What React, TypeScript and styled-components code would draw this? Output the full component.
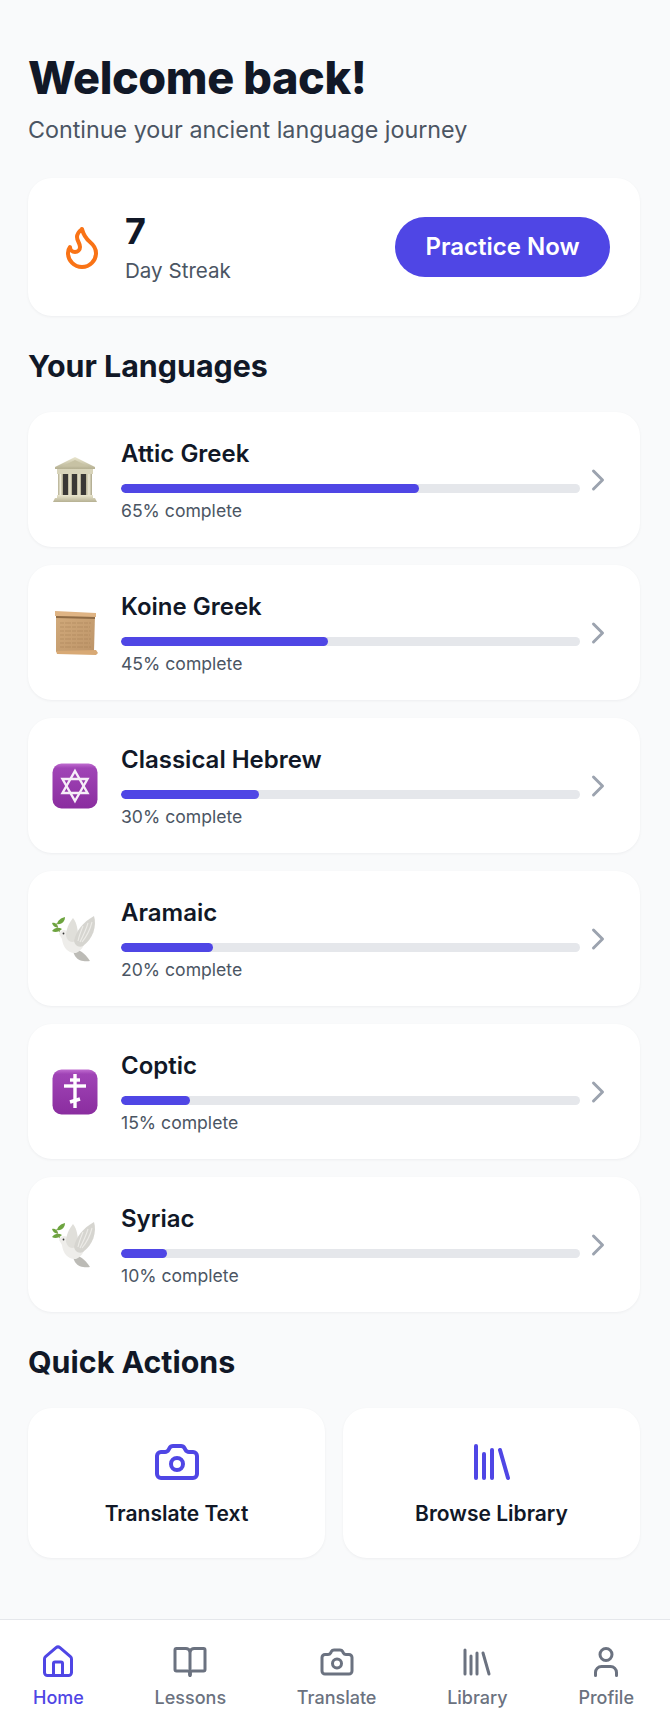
import React from 'react';
import styled, { createGlobalStyle } from 'styled-components';
import { Camera, ChevronRight, Flame, House, Library, User } from 'lucide-react';

const GlobalStyle = createGlobalStyle`
  html, body {
    margin: 0;
    padding: 0;
    background: #f9fafb;
  }
  * {
    box-sizing: border-box;
  }
`;

const Page = styled.div`
  display: flex;
  flex-direction: column;
  min-height: 100vh;
  background: #f9fafb;
  color: #111827;
  font-family: Inter, "Liberation Sans", sans-serif;
`;

const Main = styled.main`
  flex: 1;
  padding: 51px 30px 0 28px;
`;

const Title = styled.h1`
  margin: 0;
  font-size: 45px;
  line-height: 54px;
  font-weight: 800;
  letter-spacing: -0.4px;
`;

const Subtitle = styled.p`
  margin: 10px 0 0;
  font-size: 23.3px;
  line-height: 30px;
  color: #4b5563;
`;

const Card = styled.div`
  background: #fff;
  border-radius: 24px;
  box-shadow: 0 1px 3px rgba(17, 24, 39, 0.05);
`;

const StreakCard = styled(Card)`
  display: flex;
  align-items: center;
  justify-content: space-between;
  height: 138px;
  margin-top: 33px;
  padding: 0 30px;
`;

const StreakInfo = styled.div`
  display: flex;
  align-items: center;
  gap: 19px;
  color: #f97316;
`;

const StreakText = styled.div`
  padding-bottom: 2px;
`;

const StreakCount = styled.div`
  font-size: 36px;
  line-height: 44px;
  font-weight: 700;
  color: #111827;
`;

const StreakLabel = styled.div`
  margin-top: 5px;
  font-size: 20.6px;
  line-height: 26px;
  color: #4b5563;
`;

const PracticeButton = styled.button`
  width: 215px;
  height: 60px;
  padding: 0 0 2px;
  border: 0;
  border-radius: 30px;
  background: #4f46e5;
  color: #fff;
  font: 600 24px Inter, "Liberation Sans", sans-serif;
`;

const SectionTitle = styled.h2`
  margin: 0;
  font-size: 30.4px;
  line-height: 36px;
  font-weight: 700;
`;

const LanguagesTitle = styled(SectionTitle)`
  margin-top: 32px;
`;

const LanguageList = styled.div`
  display: flex;
  flex-direction: column;
  gap: 18px;
  margin-top: 28px;
`;

const LanguageCard = styled(Card)`
  display: flex;
  align-items: center;
  height: 135px;
  padding: 0 24px;
`;

const EmojiBox = styled.div`
  display: flex;
  flex: none;
  width: 46px;
  height: 46px;
  margin-right: 23px;
`;

const LanguageBody = styled.div`
  flex: 1;
  min-width: 0;
  padding-top: 2px;
`;

const LanguageName = styled.div`
  font-size: 24px;
  line-height: 30px;
  font-weight: 600;
`;

const Track = styled.div`
  height: 9px;
  margin-top: 15px;
  border-radius: 5px;
  background: #e5e7eb;
  overflow: hidden;
`;

const Fill = styled.div`
  height: 100%;
  border-radius: 5px;
  background: #4f46e5;
`;

const Percent = styled.div`
  margin-top: 6px;
  font-size: 17.6px;
  line-height: 24px;
  color: #4b5563;
`;

const Chevron = styled.div`
  display: flex;
  flex: none;
  width: 36px;
  color: #9ca3af;
`;

const ActionsTitle = styled(SectionTitle)`
  margin-top: 32px;
`;

const ActionGrid = styled.div`
  display: grid;
  grid-template-columns: 1fr 1fr;
  gap: 18px;
  margin-top: 28px;
`;

const ActionCard = styled(Card)`
  display: flex;
  flex-direction: column;
  align-items: center;
  height: 150px;
  padding-top: 30px;
  color: #4f46e5;
`;

const ActionLabel = styled.div`
  margin-top: 15px;
  font-size: 21px;
  line-height: 26px;
  font-weight: 600;
  color: #111827;
`;

const BottomNav = styled.nav`
  display: flex;
  justify-content: space-between;
  height: 115px;
  padding: 24px 36px 0 33px;
  background: #fff;
  border-top: 1px solid #e5e7eb;
`;

const NavItem = styled.div<{ $active?: boolean }>`
  display: flex;
  flex-direction: column;
  align-items: center;
  color: ${(p) => (p.$active ? '#4f46e5' : '#6b7280')};
`;

const NavLabel = styled.div`
  margin-top: 6px;
  font-size: 18px;
  line-height: 24px;
  font-weight: 500;
`;

// lucide's open book dips too far at the spine, the reference has a flatter top
const LessonsIcon = ({ size }: { size: number }) => (
  <svg
    width={size}
    height={size}
    viewBox="0 0 24 24"
    fill="none"
    stroke="currentColor"
    strokeWidth="2"
    strokeLinecap="round"
    strokeLinejoin="round"
  >
    <path d="M12 5v16" />
    <path d="M3 18a1 1 0 0 1-1-1V4a1 1 0 0 1 1-1h6a3 3 0 0 1 3 2 3 3 0 0 1 3-2h6a1 1 0 0 1 1 1v13a1 1 0 0 1-1 1h-7a2 2 0 0 0-2 3 2 2 0 0 0-2-3z" />
  </svg>
);

const TempleEmoji = () => (
  <svg width="46" height="46" viewBox="0 0 46 46">
    <defs>
      <linearGradient id="stone" x1="0" y1="0" x2="0" y2="1">
        <stop offset="0" stopColor="#eae6cf" />
        <stop offset="1" stopColor="#b5b092" />
      </linearGradient>
      <linearGradient id="column" x1="0" y1="0" x2="1" y2="0">
        <stop offset="0" stopColor="#b3ae92" />
        <stop offset="0.5" stopColor="#efebd6" />
        <stop offset="1" stopColor="#a9a488" />
      </linearGradient>
    </defs>
    <path d="M23 0 L43 10 L43 12 L3 12 L3 10 Z" fill="url(#stone)" />
    <path d="M23 3 L36 9.5 H10 Z" fill="#c7c2a4" />
    <rect x="5" y="12" width="36" height="5" fill="#d8d4ba" />
    <rect x="9" y="17" width="28" height="21" fill="#3a3836" />
    <rect x="6" y="17" width="5" height="22" fill="url(#column)" />
    <rect x="16" y="17" width="4" height="22" fill="url(#column)" />
    <rect x="25" y="17" width="4" height="22" fill="url(#column)" />
    <rect x="34" y="17" width="6" height="22" fill="url(#column)" />
    <path d="M5 38 H41 V41 H43 L45 45 H1 L3 41 H5 Z" fill="url(#stone)" />
  </svg>
);

const ScrollEmoji = () => (
  <svg width="46" height="46" viewBox="0 0 46 46">
    <defs>
      <linearGradient id="paper" x1="0" y1="0" x2="1" y2="1">
        <stop offset="0" stopColor="#d2ab7c" />
        <stop offset="1" stopColor="#bd9468" />
      </linearGradient>
    </defs>
    <path d="M4 3 L43 5 L42 41 L4 42 Z" fill="url(#paper)" />
    <path d="M3 1 L44 3 L44 7 L3 6 Z" fill="#dfb484" />
    <path d="M4 6 L43 7 L43 9 L4 8 Z" fill="#8e6a44" />
    <path d="M4 41 L44 40 L46 43 L44 45 L5 44 Z" fill="#d8a975" />
    <g stroke="#a07a52" strokeWidth="0.8" strokeOpacity="0.6" strokeDasharray="4 1 6 1">
      <path d="M8 13H39M8 17H38M8 21H39M8 25H38M8 29H39M8 33H38M8 37H39" />
    </g>
  </svg>
);

const PurpleTile = ({ id, children }: { id: string; children: React.ReactNode }) => (
  <svg width="46" height="46" viewBox="0 0 46 46">
    <defs>
      <linearGradient id={id} x1="0" y1="0" x2="0" y2="1">
        <stop offset="0" stopColor="#c06dd0" />
        <stop offset="0.1" stopColor="#a044b6" />
        <stop offset="1" stopColor="#8a2d9f" />
      </linearGradient>
    </defs>
    <rect x="0.5" y="0.5" width="45" height="45" rx="9" fill={`url(#${id})`} />
    {children}
  </svg>
);

const StarEmoji = () => (
  <PurpleTile id="tile-star">
    <g fill="none" stroke="#f6eef8" strokeWidth="2.4">
      <path d="M23 8 L35.5 30 H10.5 Z" />
      <path d="M23 38 L35.5 16 H10.5 Z" />
    </g>
  </PurpleTile>
);

const CrossEmoji = () => (
  <PurpleTile id="tile-cross">
    <g fill="none" stroke="#fff" strokeWidth="3.4">
      <path d="M23 5 V39" />
      <path d="M18 11 H28" />
      <path d="M12 17 H34" />
      <path d="M18 33 L28 30" />
    </g>
  </PurpleTile>
);

const DoveEmoji = () => (
  <svg width="46" height="46" viewBox="0 0 46 46">
    <g fill="#6da43f">
      <path d="M5 8 C6 4 9 2 13 1 C13 5 10 9 5 8Z" />
      <path d="M0 7 C3 6 5 8 6 11 C3 12 1 10 0 7Z" />
      <path d="M0 15 C3 11 7 11 10 13 C7 16 3 17 0 15Z" />
    </g>
    <path d="M5 7 C4 10 6 15 10 18" fill="none" stroke="#7e9a4c" strokeWidth="0.9" />
    <path d="M21 33 C27 33 33 37 38 45 C33 46 26 45 23 40 C22 38 21 36 21 33Z" fill="#bcbbb6" />
    <path d="M7 18 C9 13 14 13 17 17 L32 20 C34 27 31 34 24 37 C17 38 11 32 10 23 C9 21 8 20 7 18Z" fill="#eeedea" />
    <path d="M14 20 C14 13 17 7 21 2 C25 7 26 14 26 22 C22 28 16 27 14 20Z" fill="#e0dfda" />
    <path d="M22 25 C24 15 31 6 42 0 C45 10 41 23 31 30 C26 32 23 29 22 25Z" fill="#d6d5d0" />
    <path d="M31 10 C29 15 27 20 26 25 M36 7 C34 14 31 20 28 26 M40 6 C38 14 35 20 30 26" fill="none" stroke="#ecebe7" strokeWidth="1.1" />
    <circle cx="11.5" cy="17.5" r="0.9" fill="#333" />
  </svg>
);

const languages = [
  { name: 'Attic Greek', pct: 65, emoji: <TempleEmoji /> },
  { name: 'Koine Greek', pct: 45, emoji: <ScrollEmoji /> },
  { name: 'Classical Hebrew', pct: 30, emoji: <StarEmoji /> },
  { name: 'Aramaic', pct: 20, emoji: <DoveEmoji /> },
  { name: 'Coptic', pct: 15, emoji: <CrossEmoji /> },
  { name: 'Syriac', pct: 10, emoji: <DoveEmoji /> },
];

const navItems = [
  { label: 'Home', Icon: House, active: true },
  { label: 'Lessons', Icon: LessonsIcon },
  { label: 'Translate', Icon: Camera },
  { label: 'Library', Icon: Library },
  { label: 'Profile', Icon: User },
];

export default function App() {
  return (
    <Page>
      <GlobalStyle />
      <Main>
        <Title>Welcome back!</Title>
        <Subtitle>Continue your ancient language journey</Subtitle>
        <StreakCard>
          <StreakInfo>
            <Flame size={48} strokeWidth={2} />
            <StreakText>
              <StreakCount>7</StreakCount>
              <StreakLabel>Day Streak</StreakLabel>
            </StreakText>
          </StreakInfo>
          <PracticeButton>Practice Now</PracticeButton>
        </StreakCard>

        <LanguagesTitle>Your Languages</LanguagesTitle>
        <LanguageList>
          {languages.map((lang) => (
            <LanguageCard key={lang.name}>
              <EmojiBox>{lang.emoji}</EmojiBox>
              <LanguageBody>
                <LanguageName>{lang.name}</LanguageName>
                <Track>
                  <Fill style={{ width: `${lang.pct}%` }} />
                </Track>
                <Percent>{lang.pct}% complete</Percent>
              </LanguageBody>
              <Chevron>
                <ChevronRight size={36} />
              </Chevron>
            </LanguageCard>
          ))}
        </LanguageList>

        <ActionsTitle>Quick Actions</ActionsTitle>
        <ActionGrid>
          <ActionCard>
            <Camera size={48} />
            <ActionLabel>Translate Text</ActionLabel>
          </ActionCard>
          <ActionCard>
            <Library size={48} />
            <ActionLabel>Browse Library</ActionLabel>
          </ActionCard>
        </ActionGrid>
      </Main>
      <BottomNav>
        {navItems.map(({ label, Icon, active }) => (
          <NavItem key={label} $active={active}>
            <Icon size={36} />
            <NavLabel>{label}</NavLabel>
          </NavItem>
        ))}
      </BottomNav>
    </Page>
  );
}
